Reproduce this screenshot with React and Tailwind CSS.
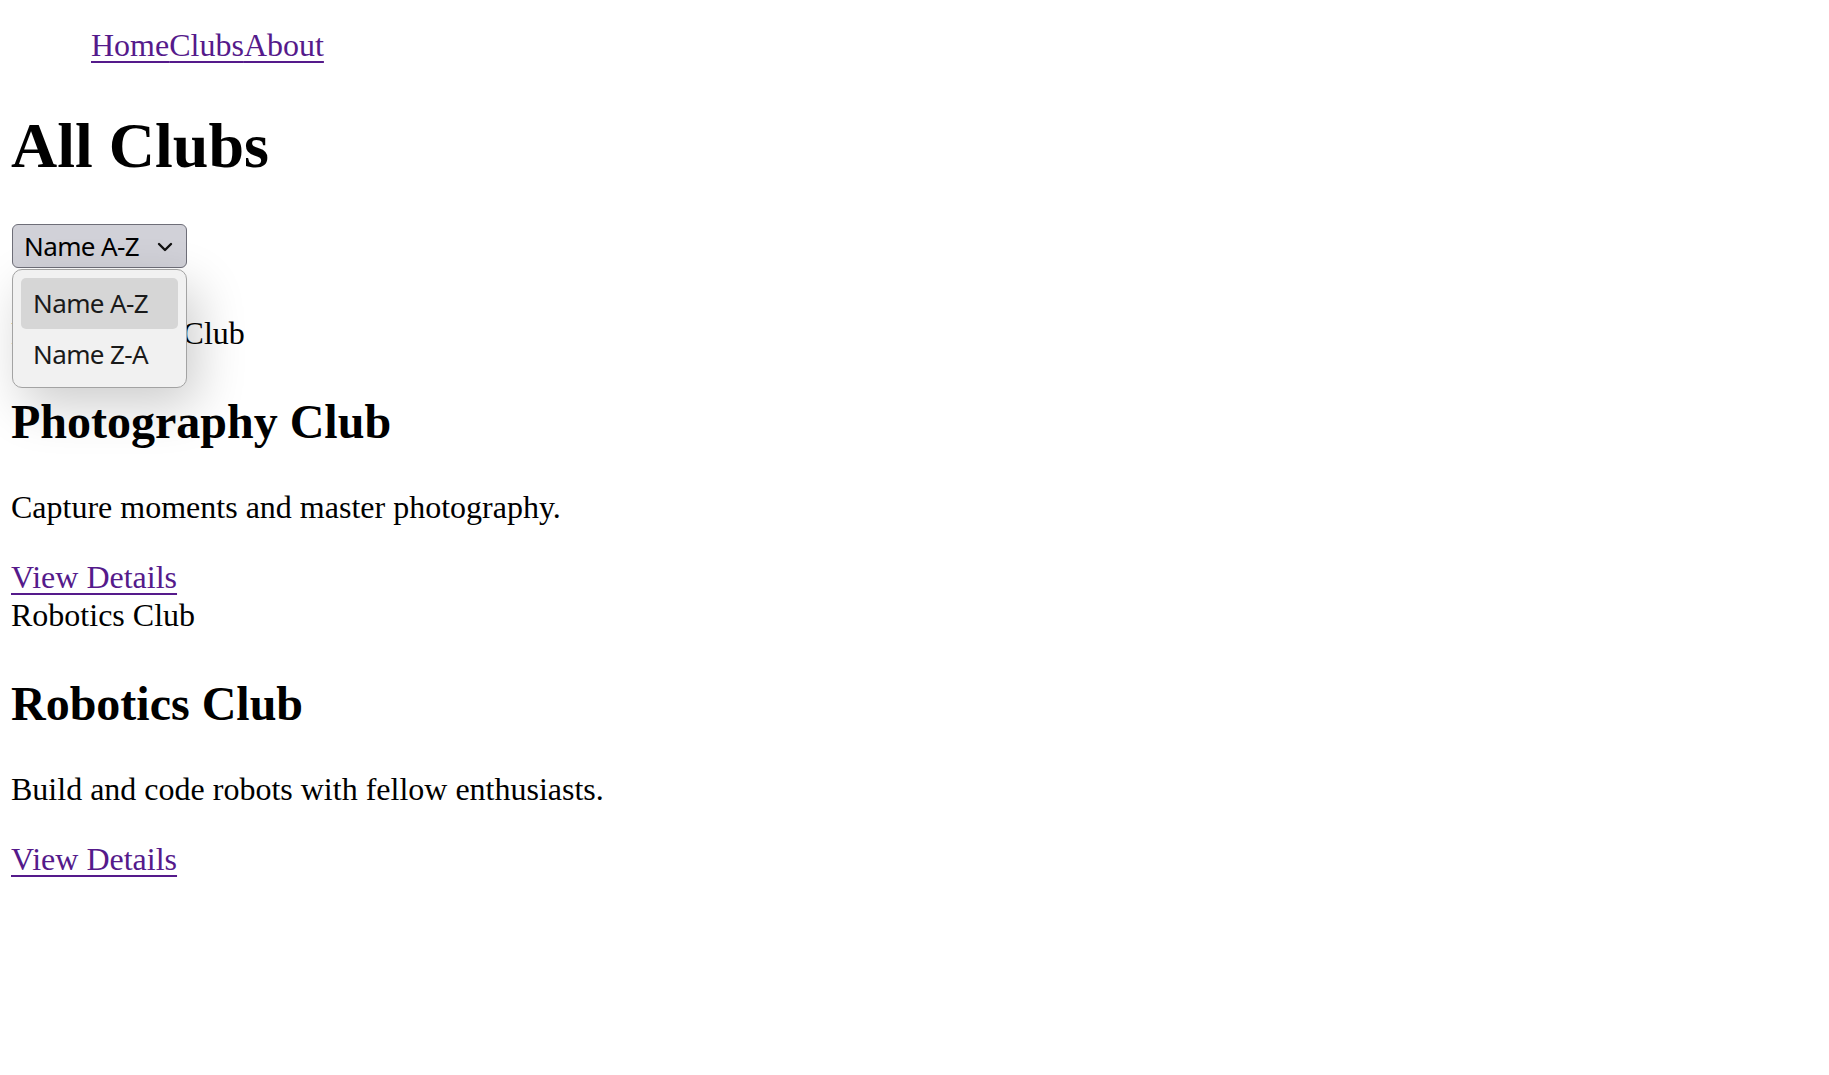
import { useState } from "react";

const clubs = [
  { name: "Photography Club", desc: "Capture moments and master photography." },
  { name: "Robotics Club", desc: "Build and code robots with fellow enthusiasts." },
];

function SortSelect() {
  const [value] = useState("Name A-Z");

  return (
    <div className="relative ml-[1px] w-[175px] h-[44px]">
      <div className="flex items-center h-full pl-[11px] pr-[13px] bg-[#d1d1d8] border-[1.5px] border-[#6e6e78] rounded-[6px] text-[26px] leading-none text-black font-['Noto_Sans',sans-serif] tracking-[-0.6px]">
        <span className="flex-1">{value}</span>
        <svg width="16" height="10" viewBox="0 0 16 10" className="mt-[2px]">
          <path d="M2 2 L8 8 L14 2" fill="none" stroke="#111" strokeWidth="2.4" strokeLinecap="round" strokeLinejoin="round" />
        </svg>
      </div>
      {/* open option list */}
      <ul className="absolute left-0 top-[45px] z-10 w-[175px] h-[119px] m-0 p-[8px] list-none bg-[#f1f1f1] border border-[#a3a3a3] rounded-[10px] shadow-[10px_18px_50px_rgba(0,0,0,0.2)] font-['Noto_Sans',sans-serif] text-[26px] tracking-[-0.6px] text-[#1a1a1a]">
        <li className="h-[51px] flex items-center pl-[12px] rounded-[5px] bg-[#d6d6d6]">Name A-Z</li>
        <li className="h-[51px] flex items-center pl-[12px]">Name Z-A</li>
      </ul>
    </div>
  );
}

export default function App() {
  return (
    <div className="min-h-screen bg-white text-black px-[11px] font-['Liberation_Serif',serif] text-[32px] leading-[37px]">
      <nav>
        <ul className="m-0 pt-[27px] pl-[80px] list-none flex">
          <li><a href="#" className="text-[#551a8b] underline underline-offset-[5px] decoration-[2px]">Home</a></li>
          <li><a href="#" className="text-[#551a8b] underline underline-offset-[5px] decoration-[2px]">Clubs</a></li>
          <li><a href="#" className="text-[#551a8b] underline underline-offset-[5px] decoration-[2px]">About</a></li>
        </ul>
      </nav>
      <h1 className="mt-[45px] text-[64px] leading-[74px] font-bold">All Clubs</h1>
      <div className="mt-[41px]">
        <SortSelect />
      </div>
      <div className="mt-[47px]">
        {clubs.map((club) => (
          <div key={club.name} className="pb-[1px]">
            <div>{club.name}</div>
            <h2 className="mt-[42px] text-[48px] leading-[55px] font-bold">{club.name}</h2>
            <p className="mt-[40px]">{club.desc}</p>
            <a href="#" className="block mt-[33px] w-fit text-[#551a8b] underline underline-offset-[5px] decoration-[2px]">
              View Details
            </a>
          </div>
        ))}
      </div>
    </div>
  );
}
